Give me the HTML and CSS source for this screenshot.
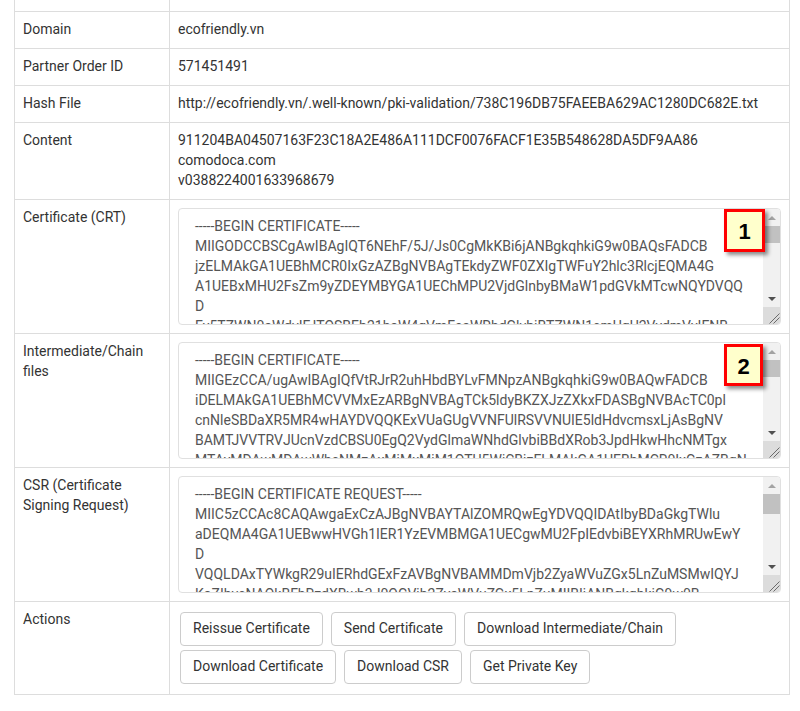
FILE: index.html
```html
<!DOCTYPE html>
<html lang="en">
<head>
<meta charset="utf-8">
<title>Certificate details</title>
<link rel="stylesheet" href="styles.css">
</head>
<body>
<table class="details">
  <tbody>
    <tr class="row-cut">
      <td class="label cut"><div class="cut-fill"></div></td>
      <td class="value cut"><div class="cut-fill"></div></td>
    </tr>
    <tr>
      <td class="label">Domain</td>
      <td class="value">ecofriendly.vn</td>
    </tr>
    <tr>
      <td class="label">Partner Order ID</td>
      <td class="value">571451491</td>
    </tr>
    <tr>
      <td class="label">Hash File</td>
      <td class="value">http://ecofriendly.vn/.well-known/pki-validation/738C196DB75FAEEBA629AC1280DC682E.txt</td>
    </tr>
    <tr>
      <td class="label">Content</td>
      <td class="value">911204BA04507163F23C18A2E486A111DCF0076FACF1E35B548628DA5DF9AA86<br>comodoca.com<br>v0388224001633968679</td>
    </tr>
    <tr>
      <td class="label">Certificate (CRT)</td>
      <td class="value">
        <div class="field">
<textarea class="code" readonly>-----BEGIN CERTIFICATE-----
MIIGODCCBSCgAwIBAgIQT6NEhF/5J/Js0CgMkKBi6jANBgkqhkiG9w0BAQsFADCB
jzELMAkGA1UEBhMCR0IxGzAZBgNVBAgTEkdyZWF0ZXIgTWFuY2hlc3RlcjEQMA4G
A1UEBxMHU2FsZm9yZDEYMBYGA1UEChMPU2VjdGlnbyBMaW1pdGVkMTcwNQYDVQQ
D
Ey5TZWN0aWdvIFJTQSBEb21haW4gVmFsaWRhdGlvbiBTZWN1cmUgU2VydmVyIENB
MB4XDTIxMTAxMTAwMDAwMFoXDTIyMTAxMTIzNTk1OVowGTEXMBUGA1UEAxMOZWNv
ZnJpZW5kbHkudm4wggEiMA0GCSqGSIb3DQEBAQUAA4IBDwAwggEKAoIBAQDCq3Qh
7xkW2pYtN5aLr0mQeV8cJ1uHfD3sZgK9bTnO4yXwP6iEvRjA2lMqUoCdFhS8GtBz
kN1vYa7ePqLx3oWcR5mJiT9fHuD0sZbG2nKyVeXtAqO6lMr4jCwPd8hUgIFsN1Ea
Q3TzYv0bLkRmH7cXoNp2WfJd5iGqAeSu9tKlMhBxC4nOyrV6wDgPjZ1sE8aIcF3U
uW2hVqKb0e4OtLmNcXy7RzJ5dPfGaSi3o9BkTw1HlAvE6MnqYr8xCpUgDsZjF2tQ
AgMBAAGjggMDMIIC/zAfBgNVHSMEGDAWgBSNjF7EVK2K4Xfpm/mbBeG4AY1h4TAd
BgNVHQ4EFgQUo4kTYq9nWzL3rXbH1cF7dP2sVgEwDgYDVR0PAQH/BAQDAgWgMAwG
A1UdEwEB/wQCMAAwHQYDVR0lBBYwFAYIKwYBBQUHAwEGCCsGAQUFBwMCMEkGA1Ud
IARCMEAwNAYLKwYBBAGyMQECAgcwJTAjBggrBgEFBQcCARYXaHR0cHM6Ly9zZWN0
aWdvLmNvbS9DUFMwCAYGZ4EMAQIBMIGEBggrBgEFBQcBAQR4MHYwTwYIKwYBBQUH
MAKGQ2h0dHA6Ly9jcnQuc2VjdGlnby5jb20vU2VjdGlnb1JTQURvbWFpblZhbGlk
YXRpb25TZWN1cmVTZXJ2ZXJDQS5jcnQwIwYIKwYBBQUHMAGGF2h0dHA6Ly9vY3Nw
LnNlY3RpZ28uY29tMC0GA1UdEQQmMCSCDmVjb2ZyaWVuZGx5LnZughJ3d3cuZWNv
-----END CERTIFICATE-----</textarea>
          <div class="scrollbar" aria-hidden="true">
            <span class="sb-btn"><span class="arrow-up"></span></span>
            <span class="sb-track"><span class="sb-thumb"></span></span>
            <span class="sb-btn"><span class="arrow-down"></span></span>
            <span class="sb-corner">
              <svg width="17" height="17" viewBox="0 0 17 17"><path d="M6.5 16.5 L16.5 6.5 M10.5 16.5 L16.5 10.5" stroke="#6b6b6b" stroke-width="1" fill="none"/></svg>
            </span>
          </div>
          <span class="badge badge-one">1</span>
        </div>
      </td>
    </tr>
    <tr>
      <td class="label">Intermediate/Chain files</td>
      <td class="value">
        <div class="field">
<textarea class="code" readonly>-----BEGIN CERTIFICATE-----
MIIGEzCCA/ugAwIBAgIQfVtRJrR2uhHbdBYLvFMNpzANBgkqhkiG9w0BAQwFADCB
iDELMAkGA1UEBhMCVVMxEzARBgNVBAgTCk5ldyBKZXJzZXkxFDASBgNVBAcTC0pl
cnNleSBDaXR5MR4wHAYDVQQKExVUaGUgVVNFUlRSVVNUIE5ldHdvcmsxLjAsBgNV
BAMTJVVTRVJUcnVzdCBSU0EgQ2VydGlmaWNhdGlvbiBBdXRob3JpdHkwHhcNMTgx
MTAyMDAwMDAwWhcNMzAxMjMxMjM1OTU5WjCBjzELMAkGA1UEBhMCR0IxGzAZBgNV
BAgTEkdyZWF0ZXIgTWFuY2hlc3RlcjEQMA4GA1UEBxMHU2FsZm9yZDEYMBYGA1UE
ChMPU2VjdGlnbyBMaW1pdGVkMTcwNQYDVQQDEy5TZWN0aWdvIFJTQSBEb21haW4g
VmFsaWRhdGlvbiBTZWN1cmUgU2VydmVyIENBMIIBIjANBgkqhkiG9w0BAQEFAAOC
AQ8AMIIBCgKCAQEA1nMz1tc8INAA0hdFuNY+B6I/x0HuMjDJsGz99J/LEpgPLT+N
TQEMgg8Xf2Iu6bhIefsWg06t1zIlk7cHv7lQP6lMw0Aq6Tn/2YHKHxYyQdqAJrkj
eocgHuP/IJo8lURvh3UGkEC0MpMWCRAIIz7S3YcPb11RFGoKacVPAXJpz9OTTG0E
oKMbgn6xmrntxZ7FN3ifmgg0+1YuWMQJDgZkW7w33PGfKGioVrCSo1yfu4iYCBsk
Haswha6vsC6eep3BwEIc4gLw6uBK0u+QDrTBQBbwb4VCSmT3pDCg/r8uoydajotY
uK3DGReEY+1vVv2Dy2A0xHS+5p3b4eTlygxfFQIDAQABo4IBbjCCAWowHwYDVR0j
BBgwFoAUU3m/WqorSs9UgOHYm8Cd8rIDZsswHQYDVR0OBBYEFI2MXsRUrYrhd+mb
+ZsF4bgBjWHhMA4GA1UdDwEB/wQEAwIBhjASBgNVHRMBAf8ECDAGAQH/AgEAMB0G
A1UdJQQWMBQGCCsGAQUFBwMBBggrBgEFBQcDAjAbBgNVHSAEFDASMAYGBFUdIAAw
CAYGZ4EMAQIBMFAGA1UdHwRJMEcwRaBDoEGGP2h0dHA6Ly9jcmwudXNlcnRydXN0
-----END CERTIFICATE-----</textarea>
          <div class="scrollbar" aria-hidden="true">
            <span class="sb-btn"><span class="arrow-up"></span></span>
            <span class="sb-track"><span class="sb-thumb"></span></span>
            <span class="sb-btn"><span class="arrow-down"></span></span>
            <span class="sb-corner">
              <svg width="17" height="17" viewBox="0 0 17 17"><path d="M6.5 16.5 L16.5 6.5 M10.5 16.5 L16.5 10.5" stroke="#6b6b6b" stroke-width="1" fill="none"/></svg>
            </span>
          </div>
          <span class="badge badge-two">2</span>
        </div>
      </td>
    </tr>
    <tr>
      <td class="label">CSR (Certificate Signing Request)</td>
      <td class="value">
        <div class="field">
<textarea class="code" readonly>-----BEGIN CERTIFICATE REQUEST-----
MIIC5zCCAc8CAQAwgaExCzAJBgNVBAYTAlZOMRQwEgYDVQQIDAtIbyBDaGkgTWlu
aDEQMA4GA1UEBwwHVGh1IER1YzEVMBMGA1UECgwMU2FpIEdvbiBEYXRhMRUwEwY
D
VQQLDAxTYWkgR29uIERhdGExFzAVBgNVBAMMDmVjb2ZyaWVuZGx5LnZuMSMwIQYJ
KoZIhvcNAQkBFhRzdXBwb3J0QGVjb2ZyaWVuZGx5LnZuMIIBIjANBgkqhkiG9w0B
AQEFAAOCAQ8AMIIBCgKCAQEAt3kQ9vLmXc2pR8sYhW1eJ0aZbN4uT7oGdKfC6iVy
Lq0rT5wMnX8bHcE2vYpJ9aDkU4sGfZ1iOmN7lRtQyW3eBxCgV6hPo2jKuS0dFzAI
c8nWqE4vLm1YtB9rXp7KsG3hZ0uJfO6aDiM5yRlTwN2bVeQgCx8oHkS4jPnU1zFA
QIDAQABoAAwDQYJKoZIhvcNAQELBQADggEBAG7hR2sKq9vXcT0mLp4aWnE8yJfB
3dZiO1uGkM6bNrV5tQeC2oHsY7wLaPj0xUgF9nDcR4vKm8iTzE1qSbA3WlYhJo6p
-----END CERTIFICATE REQUEST-----</textarea>
          <div class="scrollbar" aria-hidden="true">
            <span class="sb-btn"><span class="arrow-up"></span></span>
            <span class="sb-track"><span class="sb-thumb sb-thumb-large"></span></span>
            <span class="sb-btn"><span class="arrow-down"></span></span>
            <span class="sb-corner">
              <svg width="17" height="17" viewBox="0 0 17 17"><path d="M6.5 16.5 L16.5 6.5 M10.5 16.5 L16.5 10.5" stroke="#6b6b6b" stroke-width="1" fill="none"/></svg>
            </span>
          </div>
        </div>
      </td>
    </tr>
    <tr>
      <td class="label">Actions</td>
      <td class="value">
        <div class="actions">
          <button class="btn" type="button">Reissue Certificate</button>
          <button class="btn" type="button">Send Certificate</button>
          <button class="btn" type="button">Download Intermediate/Chain</button>
          <button class="btn" type="button">Download Certificate</button>
          <button class="btn" type="button">Download CSR</button>
          <button class="btn" type="button">Get Private Key</button>
        </div>
      </td>
    </tr>
  </tbody>
</table>
</body>
</html>
```

FILE: styles.css
```css
html, body {
  margin: 0;
  padding: 0;
  background: #fff;
}

body {
  font-family: Roboto, "Liberation Sans", Arial, sans-serif;
  font-size: 14px;
  line-height: 20px;
  color: #333;
}

.details {
  margin-left: 14px;
  width: 776px;
  table-layout: fixed;
  border-collapse: separate;
  border-spacing: 0;
  border-left: 1px solid #ddd;
}

.details td {
  border-top: 1px solid #ddd;
  border-right: 1px solid #ddd;
  padding: 7px 8px 9px;
  vertical-align: top;
  box-sizing: border-box;
}

.details td.value:has(.field),
.details td.value:has(.actions) {
  padding: 8px;
}

.details tr:last-child td {
  border-bottom: 1px solid #ddd;
}

.details td.label {
  width: 155px;
}

.details td.cut {
  border-top: none;
  padding: 0;
}

.cut-fill {
  height: 11px;
}

.field {
  position: relative;
}

.code {
  display: block;
  box-sizing: border-box;
  width: 100%;
  height: 117px;
  margin: 0;
  padding: 7px 33px 9px 16px;
  border: 1px solid #e0e0e0;
  border-radius: 4px;
  font-family: Roboto, "Liberation Sans", Arial, sans-serif;
  font-size: 14px;
  line-height: 20px;
  color: #555;
  background: #fff;
  resize: vertical;
  overflow: hidden;
  outline: none;
}

/* classic (non-overlay) scrollbar drawn over the textarea's right edge */
.scrollbar {
  position: absolute;
  top: 1px;
  right: 1px;
  bottom: 1px;
  width: 17px;
  display: flex;
  flex-direction: column;
  background: #f1f1f1;
  border-top-right-radius: 3px;
  border-bottom-right-radius: 3px;
  overflow: hidden;
}

.sb-btn {
  flex: 0 0 17px;
  display: flex;
  align-items: center;
  justify-content: center;
}

.arrow-up {
  width: 0;
  height: 0;
  border-left: 4px solid transparent;
  border-right: 4px solid transparent;
  border-bottom: 4px solid #a3a3a3;
}

.arrow-down {
  width: 0;
  height: 0;
  border-left: 4px solid transparent;
  border-right: 4px solid transparent;
  border-top: 4px solid #505050;
}

.sb-track {
  flex: 1 1 auto;
  display: flex;
  flex-direction: column;
}

.sb-thumb {
  flex: 0 0 17px;
  background: #c1c1c1;
}

.sb-thumb-large {
  flex-basis: 20px;
}

.sb-corner {
  flex: 0 0 17px;
  background: #dcdcdc;
}

.sb-corner svg {
  display: block;
}

.badge {
  position: absolute;
  top: 1px;
  left: 546px;
  box-sizing: border-box;
  width: 41px;
  height: 43px;
  display: flex;
  align-items: center;
  justify-content: center;
  padding-top: 3px;
  border: 3px solid #ff0000;
  background: #ffffcc;
  box-shadow: 3px 3px 4px rgba(0, 0, 0, 0.45);
  font-family: "Liberation Sans", Arial, sans-serif;
  font-weight: bold;
  font-size: 22px;
  line-height: 1;
  color: #000;
}

.badge-two {
  top: 2px;
  width: 39px;
  height: 42px;
}

.actions {
  display: flex;
  flex-wrap: wrap;
  gap: 4px 8px;
  padding: 2px 0 2px 2px;
}

.btn {
  font-family: Roboto, "Liberation Sans", Arial, sans-serif;
  font-size: 14px;
  line-height: 20px;
  color: #333;
  background: #fff;
  border: 1px solid #ccc;
  border-radius: 4px;
  padding: 5px 12px 7px;
  margin: 0;
  cursor: pointer;
}
```
